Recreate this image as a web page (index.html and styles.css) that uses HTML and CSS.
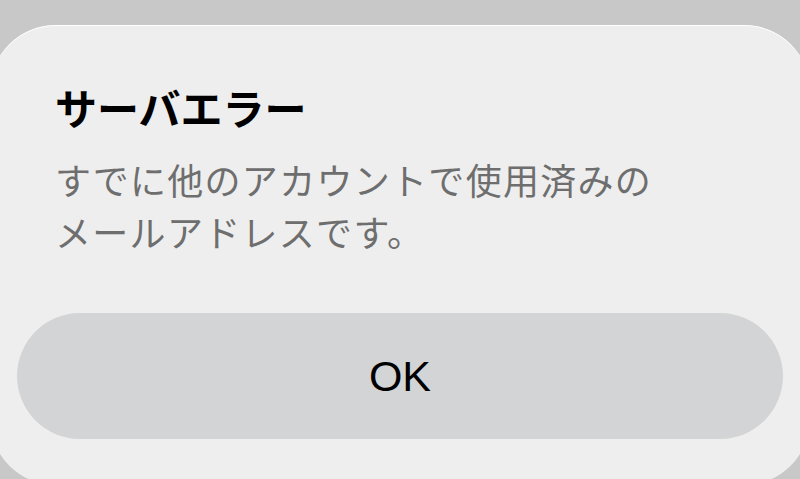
FILE: index.html
```html
<!DOCTYPE html>
<html lang="ja">
<head>
  <meta charset="UTF-8" />
  <meta name="viewport" content="width=device-width, initial-scale=1.0"/>
  <title>サーバエラー</title>
  <link rel="stylesheet" href="styles.css">
</head>
<body>
  <div class="alert">
    <div class="alert-body">
      <h1 class="alert-title">サーバエラー</h1>
      <p class="alert-message">すでに他のアカウントで使用済みの<br>メールアドレスです。</p>
    </div>
    <button type="button" class="alert-button">OK</button>
  </div>
</body>
</html>
```

FILE: styles.css
```css
html, body {
  margin: 0;
  padding: 0;
  height: 100%;
  overflow: hidden;
}

body {
  background: #c8c8c8;
  font-family: "Noto Sans CJK JP", "Liberation Sans", sans-serif;
  padding-top: 25px;
  box-sizing: border-box;
}

.alert {
  margin-left: -10px;
  width: 820px;
  height: 460px;
  box-sizing: border-box;
  padding: 0 27px;
  background: #eeeeee;
  border-radius: 66px;
  box-shadow: inset 0 1px 0 rgba(255,255,255,0.9);
}

.alert-body {
  padding: 54px 38px 0;
  height: 288px;
  box-sizing: border-box;
}

.alert-title {
  margin: 0;
  font-size: 42px;
  font-weight: 700;
  line-height: 56px;
  color: #000;
}

.alert-message {
  margin: 18px 0 0;
  font-size: 36px;
  letter-spacing: 1.3px;
  line-height: 52px;
  color: #6e6e6e;
}

.alert-button {
  display: block;
  width: 100%;
  height: 126px;
  border: none;
  border-radius: 63px;
  background: #d3d4d5;
  color: #000;
  font-family: "Liberation Sans", sans-serif;
  font-size: 43px;
  cursor: pointer;
}
```
